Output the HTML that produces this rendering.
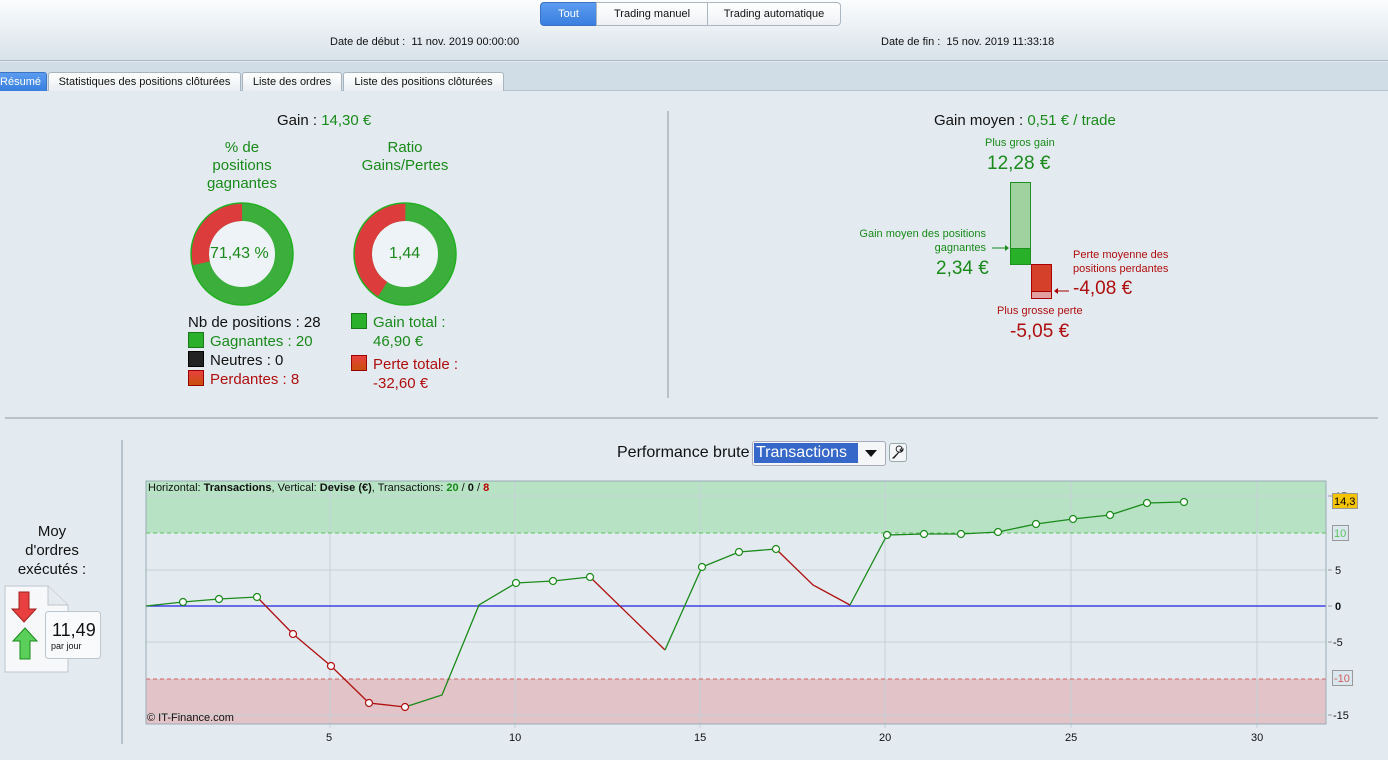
<!DOCTYPE html>
<html><head><meta charset="utf-8"><style>
*{margin:0;padding:0;box-sizing:border-box}
body{width:1388px;height:760px;overflow:hidden;background:#e3ebf1;font-family:"Liberation Sans",Arial,sans-serif;position:relative;color:#111}
.a{position:absolute;white-space:nowrap}
.g{color:#1a8a1a}.r{color:#b00e0e}
.hdr{position:absolute;left:0;top:0;width:1388px;height:61px;background:linear-gradient(#fbfcfd,#d8e3ea);border-bottom:1px solid #a9bac6}
.tabbar{position:absolute;left:0;top:62px;width:1388px;height:29px;background:#d0dde6;border-bottom:1px solid #b7c6d1}
.seg{position:absolute;top:2px;height:24px;border:1px solid #aab6c0;background:linear-gradient(#fff,#eef1f4);font-size:11px;line-height:22px;text-align:center}
.tab{position:absolute;top:72px;height:19px;border:1px solid #a8b4be;border-bottom:none;background:linear-gradient(#fff,#eaeef2);font-size:11px;line-height:18px;text-align:center;border-radius:3px 3px 0 0}
.sq{display:inline-block;width:16px;height:16px;border:1px solid;vertical-align:-2px;margin-right:6px}
</style></head><body>
<div class="hdr"></div>
<div class="seg" style="left:540px;width:57px;background:linear-gradient(#5b9cf0,#3a7fe0);color:#fff;border-color:#3b74c4;border-radius:4px 0 0 4px">Tout</div>
<div class="seg" style="left:596px;width:112px">Trading manuel</div>
<div class="seg" style="left:707px;width:134px;border-radius:0 4px 4px 0">Trading automatique</div>
<div class="a" style="left:330px;top:36px;font-size:11px">Date de début :&nbsp; 11 nov. 2019 00:00:00</div>
<div class="a" style="left:881px;top:36px;font-size:11px">Date de fin :&nbsp; 15 nov. 2019 11:33:18</div>
<div class="tabbar"></div>
<div class="tab" style="left:-6px;width:53px;background:linear-gradient(#5b9cf0,#3a7fe0);color:#fff;border-color:#3b74c4">Résumé</div>
<div class="tab" style="left:48px;width:193px">Statistiques des positions clôturées</div>
<div class="tab" style="left:242px;width:100px">Liste des ordres</div>
<div class="tab" style="left:343px;width:161px">Liste des positions clôturées</div>

<div class="a" style="left:277px;top:112px;font-size:15px">Gain : <span class="g">14,30 €</span></div>
<div class="a g" style="left:192px;top:139px;width:100px;text-align:center;font-size:15px;line-height:18px;white-space:normal">% de<br>positions<br>gagnantes</div>
<div class="a g" style="left:345px;top:139px;width:120px;text-align:center;font-size:15px;line-height:18px">Ratio<br>Gains/Pertes</div>
<svg class="a" style="left:0;top:0" width="700" height="420">
<circle cx="242" cy="254" r="42" fill="#eef3f7" stroke="#3cae3c" stroke-width="18"/>
<circle cx="242" cy="254" r="42" fill="none" stroke="#dd3c3c" stroke-width="18" stroke-dasharray="75.4 300" transform="rotate(-192.9 242 254)"/>
<circle cx="242" cy="254" r="51" fill="none" stroke="#22b022" stroke-width="1.5"/>
<circle cx="405" cy="254" r="42" fill="#eef3f7" stroke="#3cae3c" stroke-width="18"/>
<circle cx="405" cy="254" r="42" fill="none" stroke="#dd3c3c" stroke-width="18" stroke-dasharray="108.4 300" transform="rotate(-237.6 405 254)"/>
<circle cx="405" cy="254" r="51" fill="none" stroke="#22b022" stroke-width="1.5"/>
<line x1="668" y1="111" x2="668" y2="398" stroke="#8d9aa4"/>
</svg>
<div class="a g" style="left:210px;top:245px;font-size:16px">71,43 %</div>
<div class="a g" style="left:389px;top:245px;font-size:16px">1,44</div>
<div class="a" style="left:188px;top:313px;font-size:15px;line-height:19px">Nb de positions : 28<br>
<span class="g"><span class="sq" style="background:#2bb02b;border-color:#1a7a1a"></span>Gagnantes : 20</span><br>
<span><span class="sq" style="background:#222;border-color:#000"></span>Neutres : 0</span><br>
<span class="r"><span class="sq" style="background:linear-gradient(#e84040,#c8500a);border-color:#900"></span>Perdantes : 8</span></div>
<div class="a" style="left:351px;top:313px;font-size:15px;line-height:19px"><span class="g"><span class="sq" style="background:#2bb02b;border-color:#1a7a1a"></span>Gain total :<br><span style="margin-left:22px">46,90 €</span></span></div>
<div class="a r" style="left:351px;top:355px;font-size:15px;line-height:19px"><span class="sq" style="background:linear-gradient(#e84040,#c8500a);border-color:#900"></span>Perte totale :<br><span style="margin-left:22px">-32,60 €</span></div>

<div class="a" style="left:934px;top:112px;font-size:15px">Gain moyen : <span class="g">0,51 € / trade</span></div>
<div class="a g" style="left:985px;top:137px;font-size:11px">Plus gros gain</div>
<div class="a g" style="left:987px;top:153px;font-size:19px">12,28 €</div>
<div class="a g" style="left:840px;top:227px;width:146px;text-align:right;font-size:11px;line-height:14px">Gain moyen des positions<br>gagnantes</div>
<div class="a g" style="left:936px;top:258px;font-size:19px">2,34 €</div>
<div class="a r" style="left:1073px;top:248px;font-size:11px;line-height:14px">Perte moyenne des<br>positions perdantes</div>
<div class="a r" style="left:1073px;top:278px;font-size:19px">-4,08 €</div>
<div class="a r" style="left:997px;top:305px;font-size:11px">Plus grosse perte</div>
<div class="a r" style="left:1010px;top:321px;font-size:19px">-5,05 €</div>
<svg class="a" style="left:0;top:0" width="1388" height="420">
<rect x="1010.5" y="182.5" width="20" height="82" fill="#a0d2a0" stroke="#1f8f1f"/>
<rect x="1010.5" y="248.5" width="20" height="16" fill="#28b028" stroke="#1f8f1f"/>
<rect x="1031.5" y="264.5" width="20" height="34" fill="#d4402a" stroke="#a00"/>
<rect x="1031.5" y="291.5" width="20" height="7" fill="#e0a0a0" stroke="#a00"/>
<line x1="992" y1="248" x2="1007" y2="248" stroke="#1a8a1a"/><path d="M1009 248l-4-3v6z" fill="#1a8a1a"/>
<line x1="1057" y1="291" x2="1069" y2="291" stroke="#a00"/><path d="M1054 291l4-3v6z" fill="#a00"/>
<line x1="5" y1="418" x2="1378" y2="418" stroke="#8d9aa4"/>
</svg>

<svg class="a" style="left:0;top:0" width="1388" height="760">
<line x1="122" y1="440" x2="122" y2="744" stroke="#8d9aa4"/>
<rect x="146" y="481" width="1180" height="52" fill="#b7e3c4"/>
<rect x="146" y="679" width="1180" height="45" fill="#e2c3c7"/>
<g stroke="#c4d0d8" stroke-width="1">
<line x1="146" y1="496" x2="1326" y2="496"/><line x1="146" y1="570" x2="1326" y2="570"/><line x1="146" y1="642" x2="1326" y2="642"/><line x1="146" y1="715" x2="1326" y2="715"/>
<line x1="330" y1="481" x2="330" y2="728"/><line x1="515" y1="481" x2="515" y2="728"/><line x1="700" y1="481" x2="700" y2="728"/><line x1="885" y1="481" x2="885" y2="728"/><line x1="1071" y1="481" x2="1071" y2="728"/><line x1="1257" y1="481" x2="1257" y2="728"/>
</g>
<line x1="146" y1="533" x2="1326" y2="533" stroke="#5cc05c" stroke-dasharray="4 3"/>
<line x1="146" y1="679" x2="1326" y2="679" stroke="#d06060" stroke-dasharray="4 3"/>
<line x1="146" y1="606" x2="1326" y2="606" stroke="#2020e0" stroke-width="1.2"/>
<rect x="146" y="481" width="1180" height="243" fill="none" stroke="#9aabb5"/>
<g fill="none" stroke-width="1.3">
<polyline stroke="#1a8a1a" points="146,606 183,602 219,599 257,597"/>
<polyline stroke="#b01010" points="257,597 293,634 331,666 369,703 405,707"/>
<polyline stroke="#1a8a1a" points="405,707 442,695 479,605 516,583 553,581 590,577"/>
<polyline stroke="#b01010" points="590,577 665,650"/>
<polyline stroke="#1a8a1a" points="665,650 702,567 739,552 776,549"/>
<polyline stroke="#b01010" points="776,549 813,585 850,605"/>
<polyline stroke="#1a8a1a" points="850,605 887,535 924,534 961,534 998,532 1036,524 1073,519 1110,515 1147,503 1184,502"/>
</g>
<g fill="#fff" stroke="#1a8a1a" stroke-width="1.2">
<circle cx="183" cy="602" r="3.5"/><circle cx="219" cy="599" r="3.5"/><circle cx="257" cy="597" r="3.5"/>
<circle cx="516" cy="583" r="3.5"/><circle cx="553" cy="581" r="3.5"/><circle cx="590" cy="577" r="3.5"/>
<circle cx="702" cy="567" r="3.5"/><circle cx="739" cy="552" r="3.5"/><circle cx="776" cy="549" r="3.5"/>
<circle cx="887" cy="535" r="3.5"/><circle cx="924" cy="534" r="3.5"/><circle cx="961" cy="534" r="3.5"/><circle cx="998" cy="532" r="3.5"/><circle cx="1036" cy="524" r="3.5"/><circle cx="1073" cy="519" r="3.5"/><circle cx="1110" cy="515" r="3.5"/><circle cx="1147" cy="503" r="3.5"/><circle cx="1184" cy="502" r="3.5"/>
</g>
<g fill="#fff" stroke="#b01010" stroke-width="1.2">
<circle cx="293" cy="634" r="3.5"/><circle cx="331" cy="666" r="3.5"/><circle cx="369" cy="703" r="3.5"/><circle cx="405" cy="707" r="3.5"/>
</g>
<g stroke="#999"><line x1="1328" y1="496" x2="1332" y2="496"/><line x1="1328" y1="570" x2="1332" y2="570"/><line x1="1328" y1="606" x2="1332" y2="606"/><line x1="1328" y1="642" x2="1332" y2="642"/><line x1="1328" y1="715" x2="1332" y2="715"/></g>
<g font-family="Liberation Sans,Arial,sans-serif" font-size="11" fill="#111">
<text x="1335" y="500">15</text><text x="1335" y="574">5</text><text x="1335" y="610" font-weight="bold">0</text><text x="1333" y="646">-5</text><text x="1333" y="719">-15</text>
<text x="326" y="741">5</text><text x="509" y="741">10</text><text x="694" y="741">15</text><text x="879" y="741">20</text><text x="1065" y="741">25</text><text x="1251" y="741">30</text>
<text x="148" y="491">Horizontal: <tspan font-weight="bold">Transactions</tspan>, Vertical: <tspan font-weight="bold">Devise (€)</tspan>, Transactions: <tspan fill="#1a8a1a" font-weight="bold">20</tspan> / <tspan font-weight="bold">0</tspan> / <tspan fill="#b00" font-weight="bold">8</tspan></text>
<text x="147" y="721">© IT-Finance.com</text>
</g>
<rect x="1332.5" y="493.5" width="25" height="15" fill="#f5c400" stroke="#999"/>
<text x="1334" y="505" font-family="Liberation Sans,Arial,sans-serif" font-size="11">14,3</text>
<rect x="1332.5" y="525.5" width="16" height="15" fill="#dbe7ee" stroke="#999"/>
<text x="1334" y="537" font-family="Liberation Sans,Arial,sans-serif" font-size="11" fill="#5cc05c">10</text>
<rect x="1332.5" y="670.5" width="20" height="15" fill="#dbe7ee" stroke="#999"/>
<text x="1334" y="682" font-family="Liberation Sans,Arial,sans-serif" font-size="11" fill="#d06060">-10</text>
<path d="M5 586h43l20 19v67H5z" fill="#f6f8fa" stroke="#bcc6ce"/>
<path d="M48 586v19h20" fill="#e5eaee" stroke="#bcc6ce"/>
<path d="M19 592h10v17h7l-12 13-12-13h7z" fill="#e84040" stroke="#a02020"/>
<path d="M25 628l12 13h-7v18h-10v-18h-7z" fill="#5ad05a" stroke="#1a8a1a"/>
<rect x="45.5" y="611.5" width="55" height="47" rx="3" fill="#f8fafb" stroke="#bcc6ce"/>
</svg>
<div class="a" style="left:52px;top:620px;font-size:18px">11,49</div>
<div class="a" style="left:51px;top:641px;font-size:9px">par jour</div>
<div class="a" style="left:12px;top:522px;width:80px;text-align:center;font-size:15px;line-height:19px">Moy<br>d'ordres<br>exécutés :</div>
<div class="a" style="left:617px;top:444px;font-size:16px">Performance brute</div>
<div class="a" style="left:752px;top:441px;width:134px;height:25px;border:1px solid #aab;border-radius:3px;background:#f4f6f8"></div>
<div class="a" style="left:754px;top:443px;width:104px;height:20px;background:#3568c8;color:#fff;font-size:16px;line-height:20px;padding-left:2px">Transactions</div>
<svg class="a" style="left:864px;top:448px" width="14" height="10"><path d="M1 2h12l-6 7z" fill="#111"/></svg>
<div class="a" style="left:889px;top:443px;width:18px;height:19px;border:1px solid #9aa;border-radius:3px;background:#f4f6f8"></div>
<svg class="a" style="left:891px;top:445px" width="14" height="15"><path d="M2 13l6-6a3 3 0 1 1 3-4l-2 2 1 1 2-2a3 3 0 0 1-4 3l-5 6z" fill="none" stroke="#222" stroke-width="1"/></svg>
</body></html>
